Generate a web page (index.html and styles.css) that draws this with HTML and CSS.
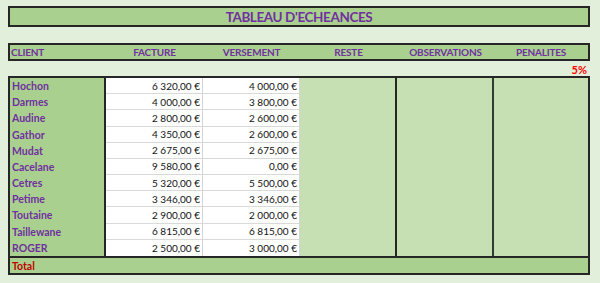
FILE: index.html
```html
<!DOCTYPE html>
<html lang="fr">
<head>
<meta charset="utf-8">
<title>Tableau d'échéances</title>
<link rel="stylesheet" href="styles.css">
</head>
<body>
<div class="sheet">
  <div class="title">TABLEAU D'ECHEANCES</div>
  <div class="header">
    <div class="h h-client">CLIENT</div>
    <div class="h">FACTURE</div>
    <div class="h">VERSEMENT</div>
    <div class="h">RESTE</div>
    <div class="h">OBSERVATIONS</div>
    <div class="h">PENALITES</div>
  </div>
  <div class="rate">5%</div>
  <div class="data">
    <div class="col col-client">
      <div class="name">Hochon</div>
      <div class="name">Darmes</div>
      <div class="name">Audine</div>
      <div class="name">Gathor</div>
      <div class="name">Mudat</div>
      <div class="name">Cacelane</div>
      <div class="name">Cetres</div>
      <div class="name">Petime</div>
      <div class="name">Toutaine</div>
      <div class="name">Taillewane</div>
      <div class="name">ROGER</div>
    </div>
    <div class="col col-num col-fact">
      <div class="num">6 320,00 €</div>
      <div class="num">4 000,00 €</div>
      <div class="num">2 800,00 €</div>
      <div class="num">4 350,00 €</div>
      <div class="num">2 675,00 €</div>
      <div class="num">9 580,00 €</div>
      <div class="num">5 320,00 €</div>
      <div class="num">3 346,00 €</div>
      <div class="num">2 900,00 €</div>
      <div class="num">6 815,00 €</div>
      <div class="num">2 500,00 €</div>
    </div>
    <div class="col col-num col-vers">
      <div class="num">4 000,00 €</div>
      <div class="num">3 800,00 €</div>
      <div class="num">2 600,00 €</div>
      <div class="num">2 600,00 €</div>
      <div class="num">2 675,00 €</div>
      <div class="num">0,00 €</div>
      <div class="num">5 500,00 €</div>
      <div class="num">3 346,00 €</div>
      <div class="num">2 000,00 €</div>
      <div class="num">6 815,00 €</div>
      <div class="num">3 000,00 €</div>
    </div>
    <div class="col col-reste"></div>
    <div class="col col-obs"></div>
    <div class="col col-pen"></div>
  </div>
  <div class="total">Total</div>
</div>
</body>
</html>
```
FILE: styles.css
```css
html, body {
  margin: 0;
  padding: 0;
  background: #e2efda;
}
body {
  font-family: Lato, "Open Sans", sans-serif;
  width: 600px;
  height: 283px;
  overflow: hidden;
}
.sheet {
  margin-left: 8px;
  width: 582px;
  padding-top: 6px;
}
.title {
  box-sizing: border-box;
  height: 21px;
  border: 2px solid #262626;
  background: #a9d08e;
  color: #7030a0;
  font-weight: 700;
  font-size: 13.5px;
  letter-spacing: -0.4px;
  display: flex;
  align-items: center;
  justify-content: center;
}
.header {
  box-sizing: border-box;
  margin-top: 16px;
  height: 18px;
  border: 2px solid #262626;
  background: #a9d08e;
  display: grid;
  grid-template-columns: 96px 97px 97px 97px 97px 94px;
  align-items: center;
  color: #7030a0;
  font-weight: 700;
  font-size: 10px;
  letter-spacing: -0.2px;
}
.h {
  text-align: center;
}
.h-client {
  text-align: left;
  padding-left: 1px;
}
.rate {
  height: 15px;
  text-align: right;
  color: #ff0000;
  font-weight: 700;
  font-size: 11px;
  line-height: 17px;
  padding-right: 3px;
}
.data {
  box-sizing: border-box;
  border: 2px solid #262626;
  border-bottom: none;
  display: grid;
  grid-template-columns: 96px 97px 97px 97px 97px 94px;
  height: 180px;
}
.col {
  box-sizing: border-box;
  display: flex;
  flex-direction: column;
}
.col-client {
  background: #a9d08e;
  border-right: 2px solid #262626;
}
.col-num {
  background: #ffffff;
  border-right: 1px solid #d4d4d4;
}
.col-reste {
  background: #c6e0b4;
  border-right: 2px solid #262626;
}
.col-obs {
  background: #c6e0b4;
  border-right: 2px solid #2f3d2a;
}
.col-pen {
  background: #c6e0b4;
}
.name, .num {
  box-sizing: border-box;
  height: 16.18px;
  font-size: 10px;
  display: flex;
  align-items: center;
}
.name {
  color: #7030a0;
  font-weight: 700;
  font-size: 10.5px;
  padding-left: 2px;
}
.num {
  justify-content: flex-end;
  padding-right: 2px;
  color: #111111;
  border-bottom: 1px solid #d9d9d9;
}
.num:last-child {
  border-bottom: none;
}
.total {
  box-sizing: border-box;
  height: 19px;
  border: 2px solid #262626;
  background: #a9d08e;
  color: #c00000;
  font-weight: 700;
  font-size: 10.5px;
  display: flex;
  align-items: center;
  padding-left: 2px;
}
```
